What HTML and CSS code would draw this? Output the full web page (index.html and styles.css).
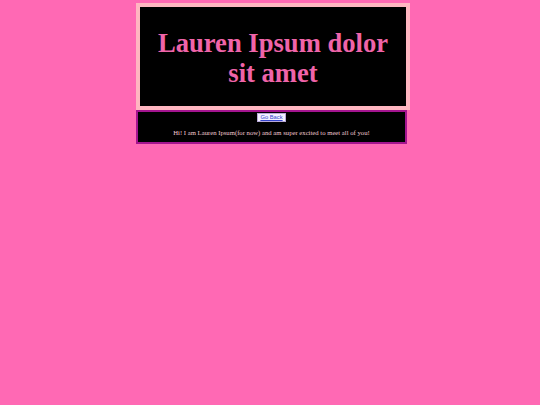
FILE: index.html
```html
<!DOCTYPE html>
<html>
<head>
<meta charset="utf-8">
<link rel="stylesheet" href="styles.css">
</head>
<body>
<div class="page">
  <header class="banner">
    <h1 class="title">Lauren Ipsum dolor sit amet</h1>
  </header>
  <section class="intro">
    <button class="back"><a href="#" class="back-link">Go Back</a></button>
    <p class="bio">Hi! I am Lauren Ipsum(for now) and am super excited to meet all of you!</p>
  </section>
</div>
</body>
</html>
```
FILE: styles.css
```css
html, body {
  margin: 0;
  padding: 0;
}
body {
  background: #ff69b4;
  font-family: "Liberation Serif", "Times New Roman", serif;
}
.page {
  width: 274px;
  margin: 3px 0 0 136px;
}
.banner {
  border: 4px solid #ffb6c1;
  background: #000;
  height: 99px;
  box-sizing: content-box;
  padding: 0;
}
.title {
  margin: 0;
  padding: 21px 12px 0;
  font-size: 26.6px;
  line-height: 30px;
  font-weight: bold;
  color: #f064a9;
  text-align: center;
}
.intro {
  width: 267px;
  border: 2px solid #a4148f;
  background: #000;
  height: 30px;
  text-align: center;
}
.back {
  display: block;
  margin: 1px auto 0;
  padding: 0 2px;
  height: 9px;
  border: 1px solid #b8a8d8;
  background: #f4f2ff;
  font-family: "Liberation Sans", Arial, sans-serif;
  font-size: 5.8px;
  line-height: 7px;
}
.back-link {
  color: #3344cc;
  text-decoration: underline;
}
.bio {
  margin: 7px 0 0;
  font-size: 6.7px;
  line-height: 8px;
  color: #f0c8d0;
}
```
